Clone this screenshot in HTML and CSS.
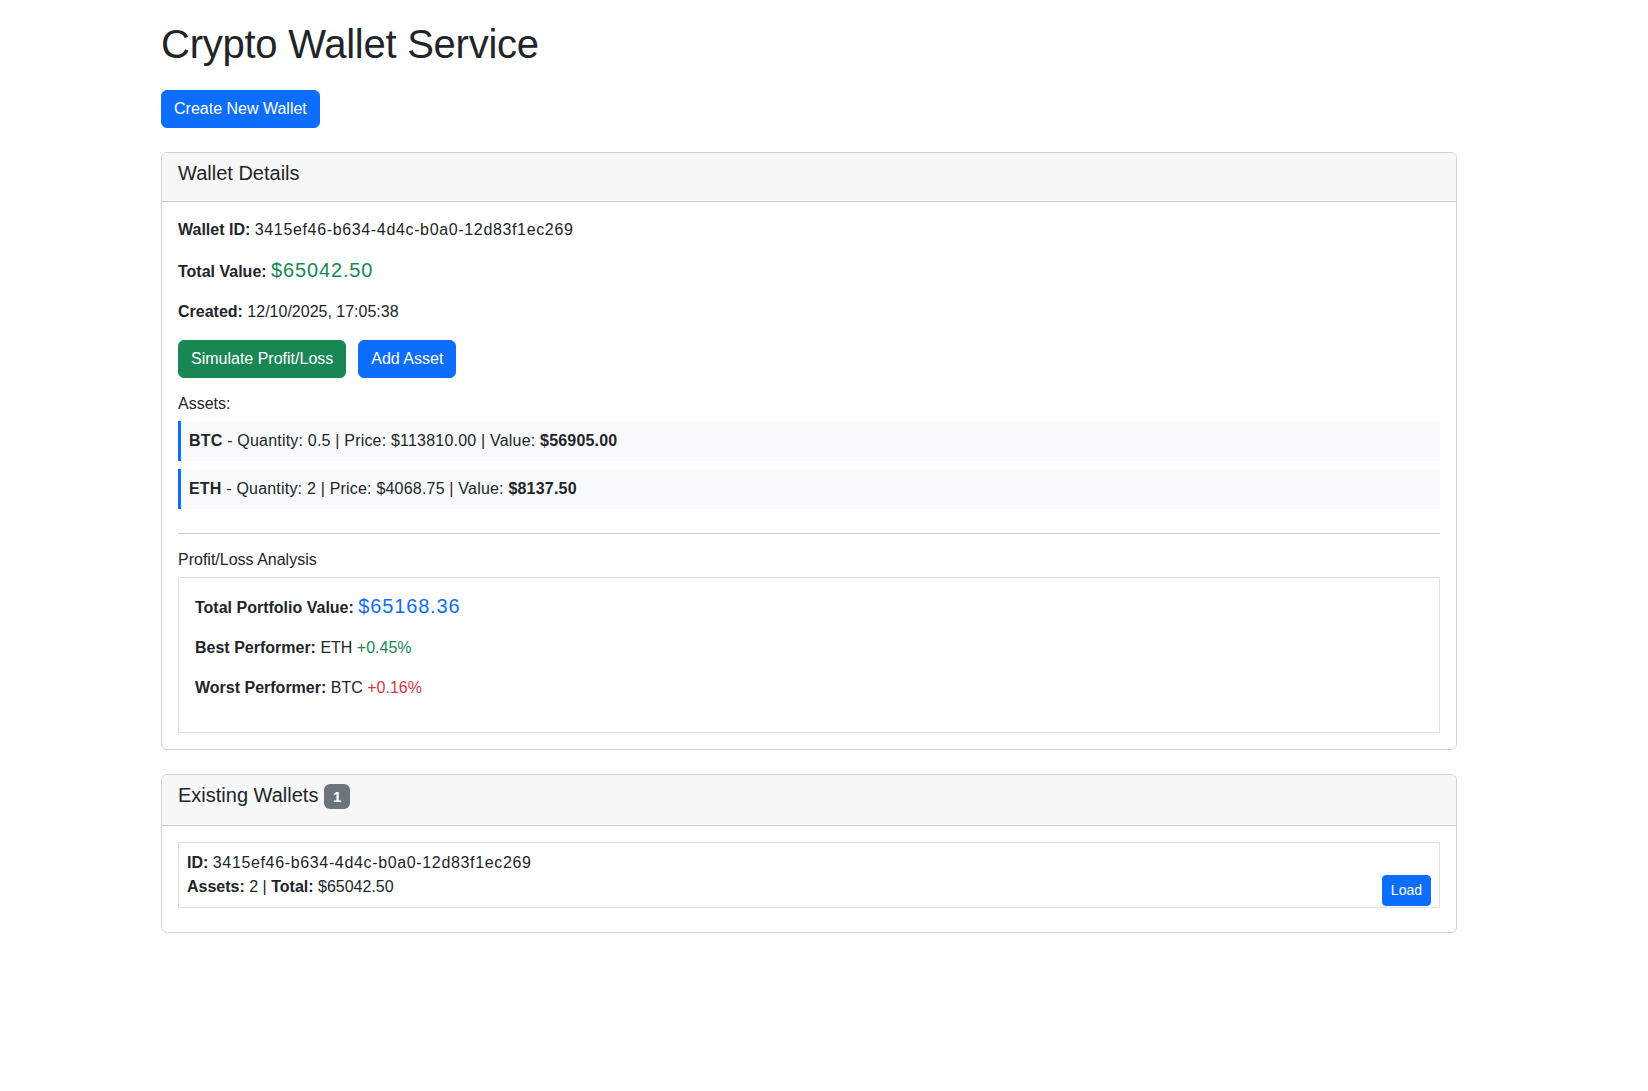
FILE: index.html
```html
<!DOCTYPE html>
<html lang="en">
<head>
<meta charset="utf-8">
<title>Crypto Wallet Service</title>
<link rel="stylesheet" href="styles.css">
</head>
<body>
<div class="container">
  <h1 class="page-title">Crypto Wallet Service</h1>
  <button class="btn btn-primary create-btn">Create New Wallet</button>

  <div class="card">
    <div class="card-header"><h5 class="card-title">Wallet Details</h5></div>
    <div class="card-body">
      <p><strong>Wallet ID:</strong> <span class="uuid">3415ef46-b634-4d4c-b0a0-12d83f1ec269</span></p>
      <p><strong>Total Value:</strong> <span class="big-value text-success">$65042.50</span></p>
      <p><strong>Created:</strong> 12/10/2025, 17:05:38</p>
      <div class="actions">
        <button class="btn btn-success">Simulate Profit/Loss</button>
        <button class="btn btn-primary">Add Asset</button>
      </div>
      <h6 class="section-title">Assets:</h6>
      <div class="asset-list">
        <div class="asset-item"><strong>BTC</strong> - Quantity: 0.5 | Price: $113810.00 | Value: <strong>$56905.00</strong></div>
        <div class="asset-item"><strong>ETH</strong> - Quantity: 2 | Price: $4068.75 | Value: <strong>$8137.50</strong></div>
      </div>
      <hr class="divider">
      <h6 class="section-title">Profit/Loss Analysis</h6>
      <div class="analysis">
        <p><strong>Total Portfolio Value:</strong> <span class="big-value text-primary">$65168.36</span></p>
        <p><strong>Best Performer:</strong> ETH <span class="text-success">+0.45%</span></p>
        <p><strong>Worst Performer:</strong> BTC <span class="text-danger">+0.16%</span></p>
      </div>
    </div>
  </div>

  <div class="card">
    <div class="card-header"><h5 class="card-title">Existing Wallets <span class="badge">1</span></h5></div>
    <div class="card-body">
      <div class="wallet-item">
        <strong>ID:</strong> <span class="uuid">3415ef46-b634-4d4c-b0a0-12d83f1ec269</span><br>
        <strong>Assets:</strong> 2 | <strong>Total:</strong> $65042.50
        <button class="btn btn-sm btn-primary load-btn">Load</button>
      </div>
    </div>
  </div>
</div>
</body>
</html>
```

FILE: styles.css
```css
* {
  box-sizing: border-box;
}

body {
  margin: 0;
  font-family: "Liberation Sans", Arial, Helvetica, sans-serif;
  font-size: 16px;
  line-height: 1.5;
  color: #212529;
  background: #fff;
}

.container {
  width: 1296px;
  margin-left: 161px;
  padding-top: 20px;
}

.page-title {
  margin: 0 0 22px;
  font-size: 40px;
  font-weight: 500;
  line-height: 1.2;
  letter-spacing: -0.25px;
}

p {
  margin: 0 0 16px;
}

strong {
  font-weight: 700;
}

.uuid {
  letter-spacing: 0.65px;
}

.btn {
  display: inline-block;
  font-family: inherit;
  font-size: 16px;
  line-height: 1.5;
  font-weight: 400;
  padding: 6px 12px;
  border: 1px solid transparent;
  border-radius: 6px;
  color: #fff;
  cursor: pointer;
}

.btn-primary {
  background: #0d6efd;
  border-color: #0d6efd;
}

.btn-success {
  background: #198754;
  border-color: #198754;
}

.btn-sm {
  font-size: 14px;
  padding: 4px 8px;
  border-radius: 4px;
}

.create-btn {
  margin-bottom: 24px;
}

.card {
  border: 1px solid rgba(0, 0, 0, 0.175);
  border-radius: 6px;
  margin-bottom: 24px;
  overflow: hidden;
}

.card-header {
  background: #f7f7f7;
  border-bottom: 1px solid rgba(0, 0, 0, 0.175);
  padding: 8px 16px;
}

.card-title {
  margin: 0 0 8px;
  font-size: 20px;
  font-weight: 500;
  line-height: 1.2;
}

.card-body {
  padding: 16px;
}

.big-value {
  font-size: 20px;
  line-height: 1.2;
  letter-spacing: 0.85px;
}

.text-success {
  color: #198754;
}

.text-primary {
  color: #0d6efd;
}

.text-danger {
  color: #dc3545;
}

.actions {
  display: flex;
  gap: 12px;
  margin-bottom: 16px;
}

.section-title {
  margin: 0 0 8px;
  font-size: 16px;
  font-weight: 500;
  line-height: 1.2;
}

.asset-list {
  display: flex;
  flex-direction: column;
  gap: 8px;
  margin-bottom: 24px;
}

.asset-item {
  background: #f8f9fa;
  border-left: 3px solid #0d6efd;
  padding: 8px;
  letter-spacing: 0.2px;
}

.divider {
  margin: 16px 0;
  border: 0;
  border-top: 1px solid #c8c9ca;
  height: 0;
}

.analysis {
  border: 1px solid #dee2e6;
  padding: 16px;
}

.badge {
  display: inline-block;
  background: #6c757d;
  color: #fff;
  font-size: 15px;
  font-weight: 700;
  line-height: 1;
  padding: 5px 9px;
  border-radius: 6px;
  vertical-align: baseline;
}

.wallet-item {
  border: 1px solid #dee2e6;
  padding: 8px;
  margin-bottom: 8px;
}

.load-btn {
  float: right;
}
```
